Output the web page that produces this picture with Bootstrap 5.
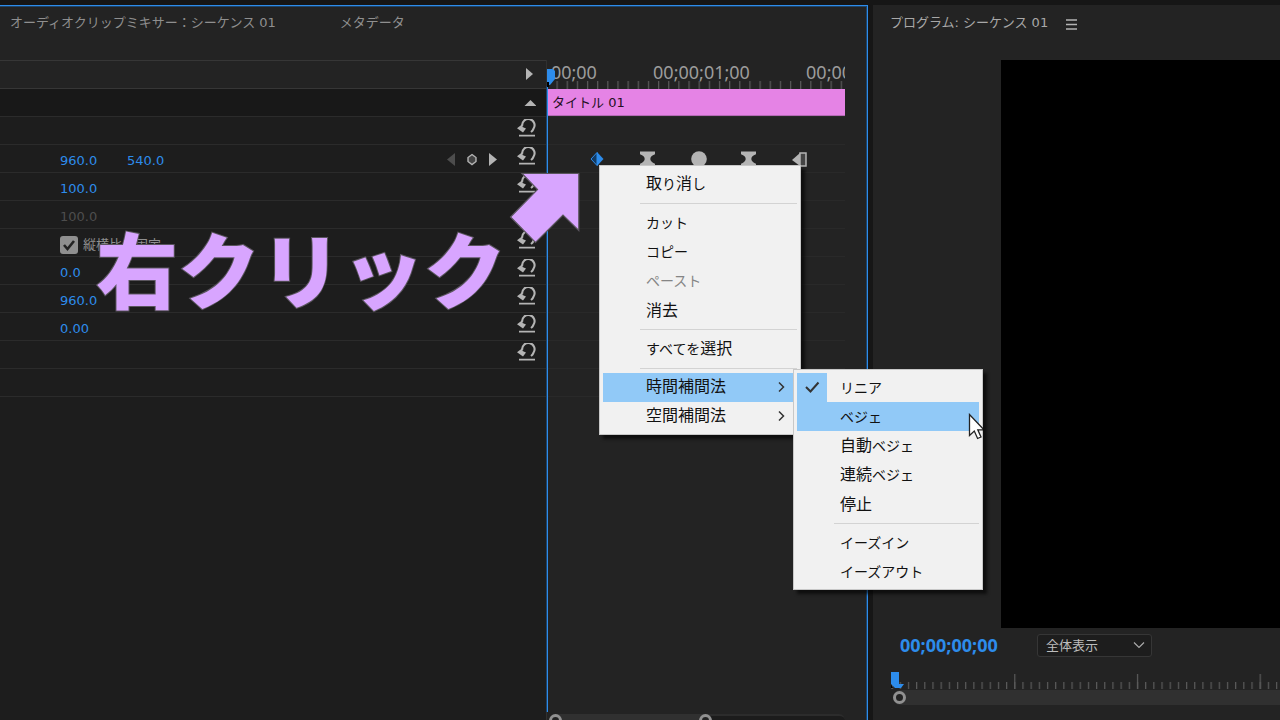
<!DOCTYPE html>
<html lang="ja">
<head>
<meta charset="utf-8">
<meta name="viewport" content="width=device-width, initial-scale=1">
<title>エフェクトコントロール</title>
<link href="https://cdn.jsdelivr.net/npm/bootstrap@5.3.0/dist/css/bootstrap.min.css" rel="stylesheet">
<style>
:root{--accent:#2d8ceb;--accent-soft:#1f4468;--line:#303030;--panel:#232323;--dim:#8f8f8f;--icon:#b4b4b4}
body{background:#161616;color:var(--dim);font:13px/20px "DejaVu Sans","Noto Sans CJK JP",sans-serif;overflow:hidden}
.workspace{display:grid;grid-template-columns:minmax(0,868fr) minmax(0,407fr);column-gap:5px;height:100vh;padding-top:5px}
.pane{background:var(--panel)}
.pane-active{border:solid var(--accent);border-width:1px 1px 0 0;box-shadow:inset -1px 1px var(--accent-soft)}
.pane-head{height:54px;padding-top:7px}
.pane-head a{color:inherit;text-decoration:none}
.jp{font-family:"Noto Sans CJK JP",sans-serif}
.split{display:grid;grid-template-columns:minmax(0,547fr) minmax(0,320fr)}
.props{background:#1d1d1d;border-right:1px solid var(--line)}
.prop{height:28px;border-top:1px solid #2b2b2b;padding:5px 10px 0 60px}
.prop:first-child{background:var(--panel);border-color:#363636}
.prop:nth-child(2){background:#181818;border-color:#363636}
.props .prop:last-child{border-bottom:1px solid #2b2b2b;height:29px}
.val{color:var(--accent);background:none;border:0;padding:0;width:60px;margin-right:7px;line-height:20px}
.val:disabled{color:#4d4d4d}
.tool{background:none;border:0;padding:0;color:var(--icon);line-height:0}
.tool:disabled{color:#4d4d4d}
.fold,.keynav{align-self:flex-start}
.fold{margin-top:-1px}
.reset{margin-top:-3px;align-self:flex-start}
.form-check-input.lock{width:18px;height:18px;margin:2px 5px 0 0;border:0;border-radius:3px;background-color:#8f8f8f}
.form-check-input.lock:checked{background-color:#8f8f8f;background-image:url("data:image/svg+xml,%3csvg xmlns='http://www.w3.org/2000/svg' viewBox='0 0 18 18'%3e%3cpath fill='none' stroke='%23222' stroke-width='2.6' d='M4 9l3.500 4L14 5'/%3e%3c/svg%3e")}
.track{margin-right:22px}
.ruler{height:29px}
.labels{margin-left:-75px;font:18px/24px "Noto Sans",sans-serif;color:#9c9c9c}
.labels span{flex:0 0 153px}
.clip-bar{height:27px;background:#e583e5;color:#241024;padding:4px 0 0 5px;border-bottom:1px solid #b56ab5}
.lane{height:28px;border-top:1px solid #292929}
.playhead{left:0;top:26px;bottom:8px;width:1px;background:var(--accent);box-shadow:-1px 0 var(--accent-soft)}
.marker{left:0;top:8px}
.zoombar{left:8px;right:22px;bottom:-6px;height:12px;background:#1c1c1c;border-top:2px solid #2c2c2c;border-radius:6px}
.zoomthumb{width:52%;height:12px;margin-top:-2px;background:#303030}
.ring{width:13px;height:13px;border:3px solid #919191;border-radius:50%;background:#232323}
.callout{left:96px;top:202px;font:900 82px/118px "Noto Sans CJK JP",sans-serif;color:#d8a5ff;-webkit-text-stroke:2px #5a555e;paint-order:stroke fill;white-space:nowrap;pointer-events:none}
.pointer{left:-38px;top:111px;pointer-events:none}
.dropdown-menu.ctx{--bs-dropdown-bg:#f1f1f1;--bs-dropdown-border-color:#c8c8c8;--bs-dropdown-border-radius:0;--bs-dropdown-padding-y:3px;--bs-dropdown-padding-x:3px;--bs-dropdown-font-size:16px;--bs-dropdown-min-width:0;--bs-dropdown-link-color:#111;--bs-dropdown-link-hover-bg:#91c9f7;--bs-dropdown-link-hover-color:#111;--bs-dropdown-link-active-bg:#91c9f7;--bs-dropdown-link-active-color:#111;--bs-dropdown-link-disabled-color:#858585;font-family:"Noto Sans CJK JP",sans-serif;font-feature-settings:"palt";box-shadow:4px 4px 3px #0009}
.ctx .dropdown-item{height:29px;line-height:24px;padding:0 8px 2px 43px}
.ctx .kana{font-size:14px}
.ctx .dropdown-divider{height:10px;margin:0 0 0 37px;border:0;background:linear-gradient(#d3d3d3,#d3d3d3) 0 5px/100% 1px no-repeat;opacity:1}
.ctx-main{left:52px;top:105px;width:202px}
.ctx-sub{left:193px;top:203px;width:190px}
.tick{left:3px;top:3px;width:30px;height:29px;background:#91c9f7}
.cursor{left:174px;top:43px}
.monitor{background:#000;margin-left:128px;height:568px}
.timecode{color:var(--accent);font:700 18px/24px "Noto Sans",sans-serif;width:137px}
.form-select.zoom{width:115px;height:23px;padding:0 30px 2px 8px;font:13px/20px "Noto Sans CJK JP",sans-serif;color:#bdbdbd;border:1px solid #363636;border-radius:3px;background:#1d1d1d url("data:image/svg+xml,%3csvg xmlns='http://www.w3.org/2000/svg' viewBox='0 0 12 12'%3e%3cpath fill='none' stroke='%23aaa' stroke-width='1.2' d='M1 3.500l5 5 5-5'/%3e%3c/svg%3e") right 6px center/12px no-repeat}
.scrub{height:15px;background:#303030;border-radius:8px 0 0 8px}
</style>
</head>
<body>
<svg width="0" height="0" class="position-absolute" aria-hidden="true">
  <symbol id="reset" viewBox="0 0 20 18"><path d="M6.200 6.800A6.200 6.200 0 1 1 17.400 9.800Q16.800 11.600 15 13" fill="none" stroke="currentColor" stroke-width="2.100"/><path d="M1 9.300L6.600 5V8L10 9.500L7 13.600zM3 15.800h16v1.600H3z" fill="currentColor"/></symbol>
  <symbol id="glass" viewBox="0 0 16 16"><path d="M0 0H16V3Q11 5 11 8Q11 11 16 13V16H0V13Q5 11 5 8Q5 5 0 3z" fill="#b4b4b4"/></symbol>
</svg>
<div class="workspace">
  <section class="pane pane-active d-flex flex-column position-relative">
    <nav class="pane-head d-flex" style="padding-left:10px">
      <a href="#mixer">オーディオクリップミキサー：シーケンス 01</a>
      <a href="#meta" class="ms-5 ps-3">メタデータ</a>
    </nav>
    <div class="split flex-grow-1">
      <div class="props">
        <div class="prop d-flex justify-content-end"><button class="tool fold" aria-label="表示"><svg width="18" height="18"><path d="M8 3v12l7-6z" fill="currentColor"/></svg></button></div>
        <div class="prop d-flex justify-content-end"><button class="tool fold" aria-label="折りたたむ"><svg width="18" height="18"><path d="M6.500 13h12L12.500 7z" fill="currentColor"/></svg></button></div>
        <div class="prop d-flex"><button class="tool reset ms-auto" aria-label="リセット"><svg width="20" height="18"><use href="#reset"/></svg></button></div>
        <div class="prop d-flex">
          <input class="val" value="960.0" aria-label="位置 X"><input class="val" value="540.0" aria-label="位置 Y">
          <button class="tool keynav ms-auto" disabled aria-label="前のキーフレーム"><svg width="12" height="18"><path d="M9 3v13L1 9.500z" fill="currentColor"/></svg></button>
          <button class="tool keynav mx-2" aria-label="キーフレーム"><svg width="12" height="18"><path d="M6 4.500L10 7.500v4L6 14.500L2 11.500v-4z" fill="#444" stroke="currentColor" stroke-width="1.400"/></svg></button>
          <button class="tool keynav" aria-label="次のキーフレーム" style="margin-right:18px"><svg width="12" height="18"><path d="M3 3v13l8-6.500z" fill="currentColor"/></svg></button>
          <button class="tool reset" aria-label="リセット"><svg width="20" height="18"><use href="#reset"/></svg></button>
        </div>
        <div class="prop d-flex"><input class="val" value="100.0" aria-label="スケール"><button class="tool reset ms-auto" aria-label="リセット"><svg width="20" height="18"><use href="#reset"/></svg></button></div>
        <div class="prop d-flex"><input class="val" value="100.0" disabled aria-label="スケール（幅）"></div>
        <div class="prop d-flex"><input class="form-check-input lock" type="checkbox" id="lock" checked><label for="lock" class="jp">縦横比を固定</label><button class="tool reset ms-auto" aria-label="リセット"><svg width="20" height="18"><use href="#reset"/></svg></button></div>
        <div class="prop d-flex"><input class="val" value="0.0" aria-label="回転"><button class="tool reset ms-auto" aria-label="リセット"><svg width="20" height="18"><use href="#reset"/></svg></button></div>
        <div class="prop d-flex"><input class="val" value="960.0" aria-label="アンカーポイント"><button class="tool reset ms-auto" aria-label="リセット"><svg width="20" height="18"><use href="#reset"/></svg></button></div>
        <div class="prop d-flex"><input class="val" value="0.00" aria-label="アンチフリッカー"><button class="tool reset ms-auto" aria-label="リセット"><svg width="20" height="18"><use href="#reset"/></svg></button></div>
        <div class="prop d-flex"><button class="tool reset ms-auto" aria-label="リセット"><svg width="20" height="18"><use href="#reset"/></svg></button></div>
        <div class="prop"></div>
      </div>
      <div class="timeline position-relative">
        <div class="track">
          <div class="ruler overflow-hidden">
            <div class="labels d-flex text-center"><span>00;00;00;00</span><span>00;00;01;00</span><span>00;00;02;00</span></div>
            <svg class="d-block" width="100%" height="8" style="margin-top:-3px"><pattern id="fine" x="9.500" width="10.150" height="8" patternUnits="userSpaceOnUse"><rect width="1.200" height="8" fill="#5a5a5a"/></pattern><rect width="100%" height="8" fill="url(#fine)"/></svg>
          </div>
          <div class="clip-bar">タイトル 01</div>
          <div class="lane"></div>
          <div class="lane d-flex align-items-center overflow-hidden" style="padding:1px 0 0 42px">
            <svg width="257" height="20">
              <path d="M8 3L14.500 10L8 17z" fill="#2d8ceb"/><path d="M8 3.500L2 10L8 16.500z" fill="#123a63" stroke="#2d8ceb"/>
              <use href="#glass" x="51" y="2" width="15" height="16"/>
              <circle cx="110" cy="10" r="7.800" fill="#b4b4b4"/>
              <use href="#glass" x="152" y="2" width="15" height="16"/>
              <path d="M211 4V17L203 11z" fill="#b4b4b4"/><rect x="211" y="4" width="6" height="13" fill="#444" stroke="#b4b4b4" stroke-width="1.500"/>
            </svg>
          </div>
          <div class="lane"></div><div class="lane"></div><div class="lane"></div><div class="lane"></div><div class="lane"></div><div class="lane"></div><div class="lane"></div><div class="lane"></div><div class="lane"></div>
        </div>
        <div class="playhead position-absolute"></div>
        <svg class="marker position-absolute" width="9" height="19"><path d="M0 1h6l2 2v8l-5 6H0z" fill="#2d8ceb"/><path d="M0 14h2v5H0z" fill="#000"/></svg>
        <div class="zoombar position-absolute"><div class="zoomthumb d-flex justify-content-between"><span class="ring" style="margin-left:-6px"></span><span class="ring" style="margin-right:-6px"></span></div></div>
        <svg class="pointer position-absolute" width="72" height="74"><path d="M13 2.500H69.800V59.500L54 44L26.500 71.500L1.500 46L28.500 18.500z" fill="#d8a5ff" stroke="#5a555e" stroke-width="1.200"/></svg>
        <div class="dropdown-menu ctx ctx-main show">
          <button class="dropdown-item">取<span class="kana">り</span>消<span class="kana">し</span></button>
          <hr class="dropdown-divider">
          <button class="dropdown-item kana">カット</button>
          <button class="dropdown-item kana">コピー</button>
          <button class="dropdown-item kana" disabled>ペースト</button>
          <button class="dropdown-item">消去</button>
          <hr class="dropdown-divider">
          <button class="dropdown-item"><span class="kana">すべてを</span>選択</button>
          <hr class="dropdown-divider">
          <button class="dropdown-item active d-flex justify-content-between">時間補間法<svg width="14" height="14" style="margin-top:7px"><path d="M4 2.500L8.500 7L4 11.500" fill="none" stroke="#333" stroke-width="1.500"/></svg></button>
          <button class="dropdown-item d-flex justify-content-between">空間補間法<svg width="14" height="14" style="margin-top:7px"><path d="M4 2.500L8.500 7L4 11.500" fill="none" stroke="#333" stroke-width="1.500"/></svg></button>
          <div class="dropdown-menu ctx ctx-sub show">
            <button class="dropdown-item kana">リニア</button>
            <button class="dropdown-item kana active">ベジェ</button>
            <button class="dropdown-item">自動<span class="kana">ベジェ</span></button>
            <button class="dropdown-item">連続<span class="kana">ベジェ</span></button>
            <button class="dropdown-item">停止</button>
            <hr class="dropdown-divider">
            <button class="dropdown-item kana">イーズイン</button>
            <button class="dropdown-item kana">イーズアウト</button>
            <span class="tick position-absolute"><svg class="d-block" width="30" height="29"><path d="M9 14l4.500 4.500L21.500 9.500" fill="none" stroke="#333" stroke-width="2"/></svg></span>
            <svg class="cursor position-absolute" width="15" height="28"><path d="M1.500 1.500V22.500L6.300 18L9.600 25.500L13 24L9.800 16.800H16z" fill="#fff" stroke="#222" stroke-width="1.300"/></svg>
          </div>
        </div>
      </div>
    </div>
    <div class="callout position-absolute">右クリック</div>
  </section>

  <section class="pane d-flex flex-column">
    <div class="pane-head d-flex" style="padding:8px 0 0 17px;color:#a8a8a8;height:55px">
      <span>プログラム: シーケンス 01</span>
      <button class="tool align-self-start" aria-label="パネルメニュー" style="margin:5px 0 0 18px"><svg width="11" height="13"><path d="M0 2h11M0 6.500h11M0 11h11" stroke="currentColor" stroke-width="1.300"/></svg></button>
    </div>
    <div class="monitor"></div>
    <div class="d-flex align-items-center" style="padding:5px 0 0 27px">
      <div class="timecode">00;00;00;00</div>
      <select class="form-select zoom" aria-label="表示倍率"><option>全体表示</option></select>
    </div>
    <div style="margin:15px 0 0 18px">
      <svg class="d-block" width="100%" height="18">
        <pattern id="minor" x="0.500" width="8.180" height="18" patternUnits="userSpaceOnUse"><rect y="10" width="1.200" height="7" fill="#5a5a5a"/></pattern>
        <pattern id="major" x="0.500" width="122.700" height="18" patternUnits="userSpaceOnUse"><rect y="2" width="1.200" height="15" fill="#5a5a5a"/></pattern>
        <rect width="100%" height="18" fill="url(#minor)"/><rect width="100%" height="18" fill="url(#major)"/>
        <path d="M0 0h8v12h5l-3 4H4L0 12z" fill="#2d8ceb"/><path d="M0 12l2 4H0z" fill="#000"/>
      </svg>
      <div class="scrub d-flex align-items-center" style="margin-left:2px"><span class="ring"></span></div>
    </div>
  </section>
</div>
<script src="https://cdn.jsdelivr.net/npm/bootstrap@5.3.0/dist/js/bootstrap.bundle.min.js"></script>
</body>
</html>
